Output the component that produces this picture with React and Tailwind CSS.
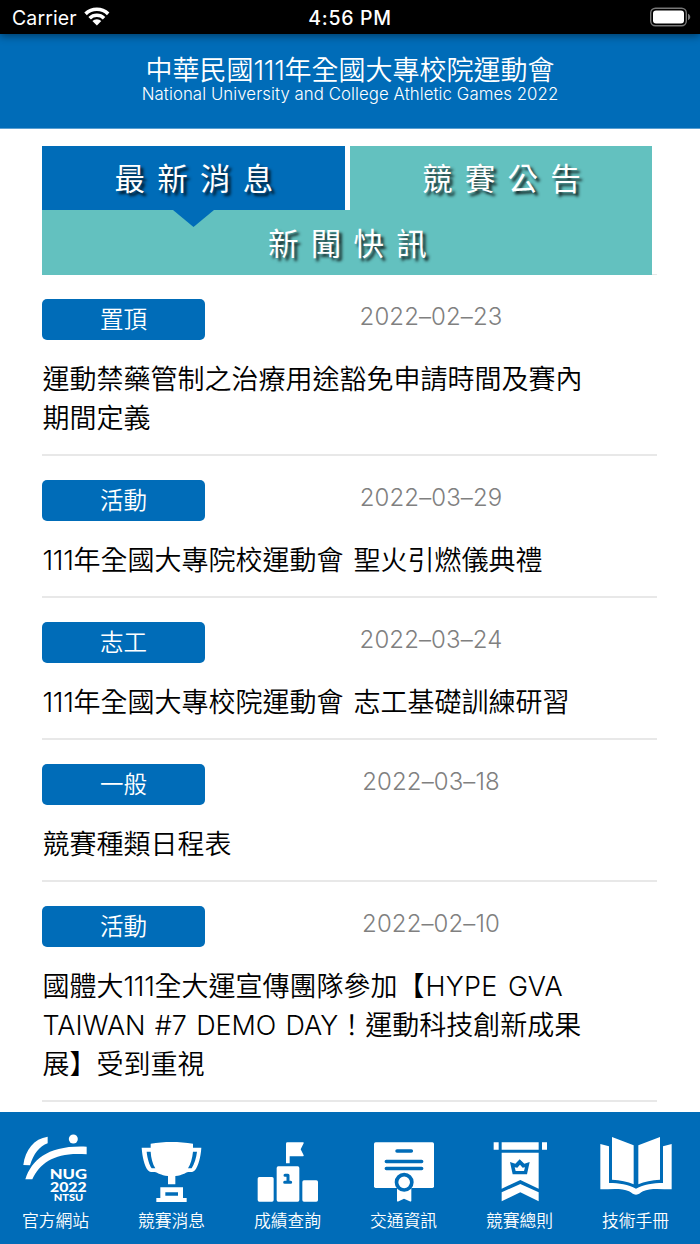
import React from 'react';

const news = [
  { tag: '置頂', date: '2022–02–23', title: ['運動禁藥管制之治療用途豁免申請時間及賽內', '期間定義'] },
  { tag: '活動', date: '2022–03–29', title: ['111年全國大專院校運動會 聖火引燃儀典禮'] },
  { tag: '志工', date: '2022–03–24', title: ['111年全國大專校院運動會 志工基礎訓練研習'] },
  { tag: '一般', date: '2022–03–18', title: ['競賽種類日程表'] },
  {
    tag: '活動',
    date: '2022–02–10',
    title: ['國體大111全大運宣傳團隊參加【HYPE GVA', 'TAIWAN #7 DEMO DAY！運動科技創新成果', '展】受到重視'],
  },
];

/* Latin runs are tracked separately from the CJK text around them. */
function Mixed({ text }) {
  return text.split(/(111|[A-Z#][A-Z#7 ]+[A-Z])/).map((part, i) => {
    if (part === '111') return <span key={i} className="tracking-[-0.3px]">111</span>;
    if (part.includes('#')) return <span key={i} className="tracking-[-0.05px] [word-spacing:1.7px]">{part}</span>;
    if (/^[A-Z]/.test(part)) return <span key={i} className="ml-px tracking-[0.3px]">{part}</span>;
    return <React.Fragment key={i}>{part}</React.Fragment>;
  });
}

function StatusBar() {
  return (
    <div className="relative z-10 grid h-[34px] grid-cols-3 items-center bg-black text-white shadow-[0_2px_8px_rgba(0,0,0,0.45)]">
      <div className="flex items-center gap-2 pl-3 pt-0.5">
        <span className="text-[19.5px] font-normal leading-6 tracking-[0.1px]">Carrier</span>
        <svg className="-mt-1 -ml-px h-[19px] w-[26px]" viewBox="0 0 26 19" fill="currentColor">
          <path d="M.3 5.6a18.2 18.2 0 0 1 25.1 0L22.9 8.2a14.3 14.3 0 0 0-20.1 0z" />
          <path d="M4.4 9.9a12.2 12.2 0 0 1 16.9 0l-2.5 2.5a8.5 8.5 0 0 0-11.9 0z" />
          <path d="M8.4 14a6.4 6.4 0 0 1 8.9 0l-4.4 4.5z" />
        </svg>
      </div>
      <div className="pt-0.5 text-center text-[19.5px] font-medium leading-6 tracking-[0.7px]">4:56 PM</div>
      <svg className="mr-[8px] h-5 w-[43px] justify-self-end" viewBox="0 0 43 20">
        <rect x="1.7" y="1.2" width="35.6" height="17.6" rx="4.8" fill="none" stroke="#777" strokeWidth="1.4" />
        <rect x="4" y="3.6" width="31" height="12.8" rx="3" fill="#fff" />
        <path d="M39 6.8c3 1.4 3 5 0 6.4z" fill="#777" />
      </svg>
    </div>
  );
}

function Tag({ children }) {
  return (
    <div className="flex h-[41px] w-[163px] items-center justify-center rounded-[5px] bg-[#006cb8] pt-px text-[23.5px] leading-none text-white">
      {children}
    </div>
  );
}

function NewsItem({ tag, date, title }) {
  return (
    <li className="border-b-2 border-[#e8e8e8] pb-4 pt-6">
      <div className="flex">
        <Tag>{tag}</Tag>
        <div className="w-[452px] pt-0.5 text-center text-[24px] leading-8 tracking-[0.1px] text-[#808080]">{date}</div>
      </div>
      <h2 className="mt-5 whitespace-nowrap pl-[0.5px] text-[27px] leading-[39px] text-black [word-spacing:2.5px]">
        {title.map((line) => (
          <span key={line} className="block">
            <Mixed text={line} />
          </span>
        ))}
      </h2>
    </li>
  );
}

const tabText = 'pl-[13px] pt-[3px] text-[30.5px] font-normal leading-none tracking-[12.2px] text-white [text-shadow:3px_3px_3px_rgba(0,0,0,0.85)]';

const icons = {
  logo: (
    <svg className="h-[94px] w-[116px]" viewBox="-9 6 348 282" fill="#fff">
      <path d="M143 80v20c-24 8-43 32-53 66l-20-1c6-46 32-79 73-85z" />
      <path d="M76 208c20-61 70-103 184-98v23c-90-8-139 22-163 75z" />
      <circle cx="220" cy="87" r="13.5" />
      <g fontFamily="Lato, sans-serif" fontWeight="900">
        <text x="149" y="206" fontSize="40" textLength="112" lengthAdjust="spacingAndGlyphs">NUG</text>
        <text x="150" y="245" fontSize="41" textLength="110" lengthAdjust="spacingAndGlyphs">2022</text>
        <text x="161" y="272" fontSize="27" textLength="89" lengthAdjust="spacingAndGlyphs">NTSU</text>
      </g>
    </svg>
  ),
  trophy: (
    <svg className="h-[94px] w-[116px]" viewBox="339 6 348 282" fill="#fff">
      <path d="M452 101c40-7 85-7 127 0v12h25c-2 30-9 54-19 68-5 5-11 6-20 5-10 2-16 10-39 12v25h-22v-25c-23-2-30-10-40-12-9 1-16 0-21-6-10-14-16-38-18-67h27zM440 125c2 20 8 40 15 50h11c-8-13-13-31-14-50zM579 125c-2 20-7 38-15 50h11c8-13 14-32 16-50z" fillRule="evenodd" />
      <path d="M481 232h68v32h11v12h-91v-12h12zM496 247v10h38v-10z" fillRule="evenodd" />
    </svg>
  ),
  podium: (
    <svg className="h-[94px] w-[116px]" viewBox="-3 6 348 282" fill="#fff">
      <path d="M168 101q0-4 4-4h48q2 1 1 3l-9 18 9 18q1 3-2 3h-40v21h-11z" />
      <rect x="83" y="201" width="48" height="74" rx="5" />
      <rect x="140" y="169" width="68" height="106" rx="5" />
      <rect x="217" y="211" width="47" height="64" rx="5" />
      <path d="M165 196h9v20M164 217h18" fill="none" stroke="#006cb8" strokeWidth="9" strokeLinecap="round" strokeLinejoin="round" />
    </svg>
  ),
  certificate: (
    <svg className="h-[94px] w-[116px]" viewBox="345 6 348 282" fill="#fff">
      <rect x="432" y="97" width="180" height="137" rx="5" />
      <path d="M501 230h43v42q-1 4-5 2l-17-8-16 8q-5 2-5-2z" />
      <circle cx="522.5" cy="217" r="23" stroke="#006cb8" strokeWidth="11" />
      <path d="M501 123h43M469 154.5h106M469 175.5h106" fill="none" stroke="#006cb8" strokeWidth="10.5" strokeLinecap="round" />
    </svg>
  ),
  banner: (
    <svg className="h-[94px] w-[116px]" viewBox="3 6 348 282" fill="#fff">
      <path d="M101 97h15v22h-15zM125 97h111v22H125zM246 97h15v22h-15z" />
      <path d="M125 128h111v108l-55-26-56 26z" />
      <path d="M125 247l56-25 55 25v27l-55-27-56 27z" />
      <path d="M150 156l16 5 13-13 14 13 16-5-8 37h-43z" fill="#006cb8" />
      <path d="M164 172l8 1 8-9 8 9 7-1-3 11h-25z" />
    </svg>
  ),
  book: (
    <svg className="h-[94px] w-[116px]" viewBox="351 6 348 282" fill="#fff">
      <path d="M456 81l65 25v117c-18-9-40-12-65-14zM600 81l-65 25v117c18-9 40-12 65-14z" />
      <path d="M421 102l26 7v110c30 0 58 4 81 17 23-13 51-17 81-17V109l26-7v136c-34 0-66-4-86 6-8 4-12 10-21 10s-13-6-21-10c-20-10-52-6-86-6z" />
    </svg>
  ),
};

const nav = [
  ['logo', '官方網站'],
  ['trophy', '競賽消息'],
  ['podium', '成績查詢'],
  ['certificate', '交通資訊'],
  ['banner', '競賽總則'],
  ['book', '技術手冊'],
];

export default function App() {
  return (
    <div className="flex h-[1244px] w-[700px] flex-col overflow-hidden bg-white font-['Inter','Noto_Sans_CJK_TC',sans-serif] font-[350]">
      <StatusBar />
      <header className="flex h-[94px] flex-col items-center bg-[#006cb8] pt-[22px] text-white">
        <h1 className="whitespace-nowrap text-[27px] leading-[30px]">
          <Mixed text="中華民國111年全國大專校院運動會" />
        </h1>
        <p className="whitespace-nowrap text-[16.8px] leading-[17px] tracking-[0.07px]">National University and College Athletic Games 2022</p>
      </header>

      <main className="flex-1 border-t border-[#5a9fd1] pl-[42px] pt-[17px]">
        <div className="relative w-[610px]">
          <div className="flex gap-[5px]">
            <div className={`relative flex h-16 w-[303px] items-center justify-center bg-[#006cb8] ${tabText}`}>
              最新消息
              <svg className="absolute left-[131px] top-16 h-[17px] w-[41px]" viewBox="0 0 41 17">
                <path d="M0 0h41L20.5 17z" fill="#006cb8" />
              </svg>
            </div>
            <div className={`flex h-16 w-[302px] items-center justify-center bg-[#63c1bf] ${tabText}`}>競賽公告</div>
          </div>
          <div className={`flex h-[65px] items-center justify-center bg-[#63c1bf] ${tabText}`}>新聞快訊</div>
        </div>
        <ul className="-mt-px w-[615px] border-t border-[#e8e8e8]">
          {news.map((item) => (
            <NewsItem key={item.date} {...item} />
          ))}
        </ul>
      </main>

      <nav className="-ml-[3px] flex h-[132px] w-[703px] shrink-0 bg-[#006cb8] text-white">
        {nav.map(([icon, label]) => (
          <div key={icon} className="flex w-[116px] flex-col items-center">
            {icons[icon]}
            <span className="mt-[3px] pl-px text-[16.8px] leading-6">{label}</span>
          </div>
        ))}
      </nav>
    </div>
  );
}
